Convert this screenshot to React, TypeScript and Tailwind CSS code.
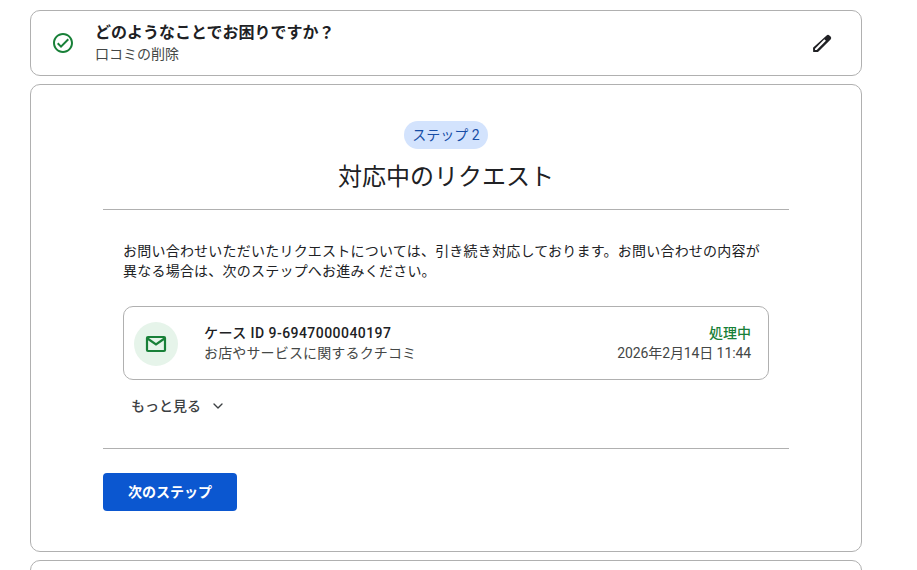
import { ChevronDown } from "lucide-react";

const font = "font-['Roboto','Noto_Sans_CJK_JP',sans-serif]";

export default function App() {
  return (
    <div className={`h-[570px] w-[917px] overflow-hidden bg-white pl-[30px] pt-[10px] ${font}`}>
      <div className="flex w-[832px] flex-col gap-2">
        {/* Header card */}
        <div className="flex h-[66px] items-center rounded-[10px] border border-[#b0b0b0] pl-[20px] pr-[27px]">
          <svg viewBox="0 0 24 24" className="h-6 w-6 fill-[#188038]">
            <path d="M12 2C6.48 2 2 6.48 2 12s4.48 10 10 10 10-4.48 10-10S17.52 2 12 2zm0 18c-4.41 0-8-3.59-8-8s3.59-8 8-8 8 3.59 8 8-3.59 8-8 8zm4.59-12.42L10 14.17l-2.59-2.58L6 13l4 4 8-8-1.41-1.42z" />
          </svg>
          <div className="ml-[20px] flex-1">
            <div className="text-[16px] font-bold leading-[22px] text-[#202124]">どのようなことでお困りですか？</div>
            <div className="text-[14px] leading-[20px] text-[#444746]">口コミの削除</div>
          </div>
          <svg viewBox="0 0 24 24" className="mt-[2px] h-6 w-6 fill-[#202124]">
            <path d="M16.6 3.4a2 2 0 0 1 2.8 0l1.2 1.2a2 2 0 0 1 0 2.8L8 20H3.2L3 15.8 16.6 3.4zM5 16.7V18h1.7L15.9 8.8l-1.6-1.6L5 16.7z" />
          </svg>
        </div>

        {/* Step card */}
        <div className="flex h-[468px] flex-col rounded-[10px] border border-[#b0b0b0] px-[72px] pt-[36px]">
          <div className="flex flex-col items-center border-b border-[#b0b0b0] pb-[16px]">
            <span className="flex h-[28px] items-center rounded-full bg-[#d3e3fd] px-[8px] text-[14px] text-[#174ea6]">ステップ 2</span>
            <h1 className="mt-[12px] text-[24px] font-normal leading-[32px] text-[#202124]">対応中のリクエスト</h1>
          </div>

          <div className="px-[20px] pt-[31px]">
            <p className="w-[660px] text-[14px] leading-[20px] tracking-[0.22px] text-[#202124]">
              お問い合わせいただいたリクエストについては、引き続き対応しております。お問い合わせの内容が
              <br />
              異なる場合は、次のステップへお進みください。
            </p>

            <div className="mt-[25px] flex h-[74px] items-center rounded-[10px] border border-[#b0b0b0] pl-[10px] pr-[17px]">
              <div className="mt-[1px] flex h-[44px] w-[44px] items-center justify-center rounded-full bg-[#e6f4ea]">
                <svg viewBox="0 0 24 24" className="h-6 w-6 fill-none stroke-[#188038] stroke-[2.2]">
                  <rect x="3" y="5" width="18" height="14" rx="1" />
                  <path d="M3.5 6.5 12 12.5l8.5-6" />
                </svg>
              </div>
              <div className="ml-[26px] flex-1">
                <div className="text-[14px] font-medium leading-[20px] tracking-[0.45px] text-[#202124]">ケース ID 9-6947000040197</div>
                <div className="text-[14px] leading-[20px] tracking-[0.15px] text-[#444746]">お店やサービスに関するクチコミ</div>
              </div>
              <div className="text-right">
                <div className="text-[14px] font-medium leading-[20px] text-[#188038]">処理中</div>
                <div className="text-[14px] leading-[20px] tracking-[-0.1px] text-[#444746]">2026年2月14日 11:44</div>
              </div>
            </div>

            <div className="mt-[16px] flex h-[20px] items-center pl-[8px] text-[14px] font-medium text-[#3c4043]">
              もっと見る
              <ChevronDown className="ml-[9px] h-[16px] w-[16px]" strokeWidth={2} />
            </div>
          </div>

          <div className="mt-[32px] border-t border-[#b0b0b0] pt-[24px]">
            <button className="flex h-[38px] w-[134px] items-center justify-center rounded-[4px] bg-[#0b57d0] text-[14px] font-bold text-white">
              次のステップ
            </button>
          </div>
        </div>

        {/* Next card, cut off by the window */}
        <div className="h-[40px] rounded-[10px] border border-[#b0b0b0]" />
      </div>
    </div>
  );
}
